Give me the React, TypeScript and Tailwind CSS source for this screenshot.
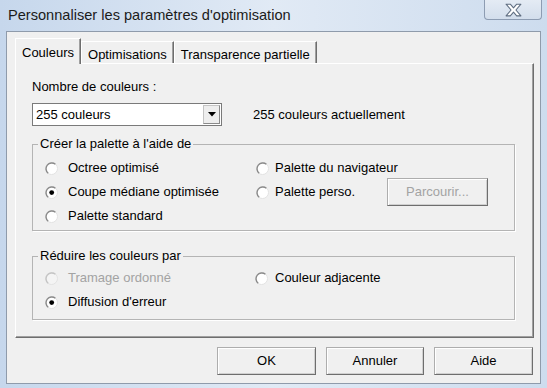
import React from "react";

function Radio({ checked = false, disabled = false }: { checked?: boolean; disabled?: boolean }) {
  return (
    <svg width="13" height="13" viewBox="0 0 13 13" className="shrink-0">
      <circle cx="6.5" cy="6.5" r="6" fill={disabled ? "#f4f4f4" : "#ffffff"} stroke="#e2e2e2" strokeWidth="1" />
      <path
        d="M3.2 11.2 A5.6 5.6 0 0 1 10.4 2.2"
        fill="none"
        stroke={disabled ? "#c4c4c4" : "#8a8a8a"}
        strokeWidth="1.4"
      />
      {checked && <circle cx="6.7" cy="6.6" r="2.4" fill="#000000" />}
    </svg>
  );
}

function Option({
  label,
  checked,
  disabled,
  gap = "gap-[10px]",
}: {
  label: string;
  checked?: boolean;
  disabled?: boolean;
  gap?: string;
}) {
  return (
    <div className={`flex items-center ${gap}`}>
      <Radio checked={checked} disabled={disabled} />
      <span className={disabled ? "text-[#a3a3a3]" : "text-black"}>{label}</span>
    </div>
  );
}

function Button({ label, disabled, className = "" }: { label: string; disabled?: boolean; className?: string }) {
  return (
    <div
      className={`flex h-[28px] items-center justify-center border border-[#adadad] border-r-[#6e6e6e] border-b-[#6e6e6e] bg-[#f0f0f0] shadow-[inset_1px_1px_0_#ffffff,inset_-1px_-1px_0_#d0d0d0] ${
        disabled ? "text-[#a3a3a3]" : "text-black"
      } ${className}`}
    >
      {label}
    </div>
  );
}

function GroupBox({ title, children, className = "" }: { title: string; children: React.ReactNode; className?: string }) {
  return (
    <fieldset className={`w-[483px] border border-[#b4b4b4] shadow-[1px_1px_0_#ffffff] ${className}`}>
      <legend className="ml-[5px] px-[2px] leading-[16px]">{title}</legend>
      {children}
    </fieldset>
  );
}

export default function App() {
  const tabs = ["Couleurs", "Optimisations", "Transparence partielle"];

  return (
    <div className="flex h-[388px] w-[547px] flex-col overflow-hidden bg-gradient-to-r from-[#c6d7ec] via-[#e1eaf5] to-[#cddcee] font-['Liberation_Sans',Arial,sans-serif] text-[13px] text-black">
      {/* title bar */}
      <div className="flex h-[31px] shrink-0 items-start">
        <div className="pl-[8px] pt-[7px] text-[14.6px] leading-[17px] text-[#1b1b1b]">
          Personnaliser les paramètres d'optimisation
        </div>
        <div className="ml-auto mr-[5px] flex h-[20px] w-[58px] items-center justify-center rounded-b-[4px] border border-t-0 border-[#8d9cb2] bg-gradient-to-b from-[#e4ebf4] to-[#d3deec]">
          <svg width="17" height="14" viewBox="0 0 16 13">
            <path
              d="M1 1 H5 L8 4.5 L11 1 H15 L10.3 6.5 L15 12 H11 L8 8.5 L5 12 H1 L5.7 6.5 Z"
              fill="#ffffff"
              stroke="#5f6d80"
              strokeWidth="1"
              strokeLinejoin="round"
            />
          </svg>
        </div>
      </div>

      {/* client area */}
      <div className="mx-[6px] flex h-[353px] shrink-0 flex-col border border-[#8f9bab] bg-[#f0f0f0] pl-[8px] pr-[6px] pt-[6px]">
        {/* tabs */}
        <div className="flex h-[25px] items-end">
          {tabs.map((t, i) =>
            i === 0 ? (
              <div
                key={t}
                className="relative z-10 -mb-px flex h-[26px] items-start border border-b-0 border-white border-r-[#6e6e6e] bg-[#f0f0f0] px-[6px] pt-[4px] shadow-[inset_-1px_0_0_#a0a0a0]"
              >
                {t}
              </div>
            ) : (
              <div
                key={t}
                className="flex h-[22px] items-start border border-b-0 border-white border-r-[#6e6e6e] bg-[#f0f0f0] px-[6px] pt-[3px] shadow-[inset_-1px_0_0_#a0a0a0]"
              >
                {t}
              </div>
            )
          )}
        </div>

        {/* tab panel */}
        <div className="flex h-[275px] w-[519px] flex-col border border-white border-r-[#6e6e6e] border-b-[#6e6e6e] px-[16px] shadow-[inset_-1px_-1px_0_#a0a0a0]">
          <div className="mt-[15px] h-[16px] leading-[16px]">Nombre de couleurs :</div>

          <div className="mt-[8px] flex h-[23px] items-center">
            <div className="flex h-[23px] w-[190px] items-stretch border border-[#7a7a7a] bg-white">
              <div className="flex flex-1 items-center pl-[3px]">255 couleurs</div>
              <div className="m-px flex w-[17px] items-center justify-center border border-[#c4c4c4] border-b-[#8a8a8a] border-r-[#8a8a8a] bg-[#eeeeee]">
                <svg width="8" height="5" viewBox="0 0 8 5">
                  <path d="M0 0 H8 L4 4.5 Z" fill="#000000" />
                </svg>
              </div>
            </div>
            <div className="ml-[31px]">255 couleurs actuellement</div>
          </div>

          <GroupBox title="Créer la palette à l'aide de" className="mt-[10px] pb-[2px] pt-[4px]">
            <div className="grid grid-cols-[211px_1fr] pl-[12px]">
              <div className="flex h-[24px] items-center">
                <Option label="Octree optimisé" />
              </div>
              <div className="flex h-[24px] items-center">
                <Option label="Palette du navigateur" gap="gap-[6px]" />
              </div>
              <div className="flex h-[24px] items-center">
                <Option label="Coupe médiane optimisée" checked />
              </div>
              <div className="flex h-[24px] items-center">
                <div className="w-[131px]">
                  <Option label="Palette perso." gap="gap-[6px]" />
                </div>
                <Button label="Parcourir..." disabled className="w-[101px]" />
              </div>
              <div className="flex h-[24px] items-center">
                <Option label="Palette standard" />
              </div>
              <div className="h-[24px]" />
            </div>
          </GroupBox>

          <GroupBox title="Réduire les couleurs par" className="mt-[17px] pb-[5px] pt-[2px]">
            <div className="grid grid-cols-[210px_1fr] pl-[12px]">
              <div className="flex h-[24px] items-center">
                <Option label="Tramage ordonné" disabled />
              </div>
              <div className="flex h-[24px] items-center">
                <Option label="Couleur adjacente" gap="gap-[7px]" />
              </div>
              <div className="flex h-[24px] items-center">
                <Option label="Diffusion d'erreur" checked />
              </div>
              <div className="h-[24px]" />
            </div>
          </GroupBox>
        </div>

        {/* buttons */}
        <div className="mt-[9px] flex justify-end gap-[10px] pr-px">
          <Button label="OK" className="w-[99px]" />
          <Button label="Annuler" className="w-[98px]" />
          <Button label="Aide" className="w-[99px]" />
        </div>
      </div>
    </div>
  );
}
